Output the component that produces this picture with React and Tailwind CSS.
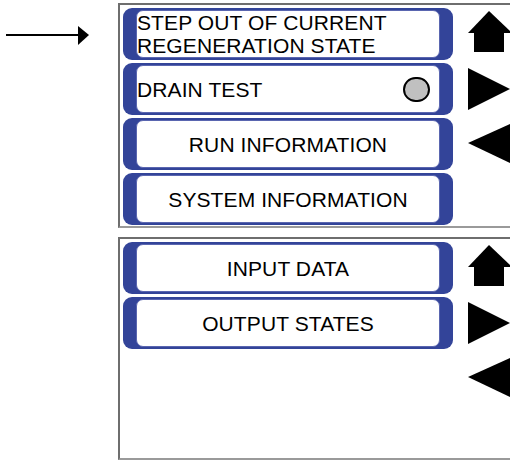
import React from 'react';

const font = { fontFamily: '"Liberation Sans", Arial, sans-serif' };

const MenuButton = ({ children, align = 'center', dot = false }) => (
  <div className="h-[52px] w-[330px] bg-[#334499] rounded-[9px] px-[13px] py-[2px] flex">
    <div
      className={`flex-1 bg-white rounded-[7px] border border-[#5a66b0] flex items-center text-[21px] leading-[23px] text-black ${
        align === 'left' ? 'justify-between pl-0 pr-[9px]' : 'justify-center'
      }`}
    >
      <span className="tracking-[0.1px]">{children}</span>
      {dot && <span className="w-[27px] h-[25px] rounded-full bg-[#c0c0c0] border-2 border-black" />}
    </div>
  </div>
);

// up / right / left navigation arrows drawn beside each menu page
const NavIcons = () => (
  <svg width="46" height="160" viewBox="0 0 46 160" className="shrink-0 ml-[13px]">
    <polygon points="2,25 23,3 46,25" fill="#000" />
    <rect x="8" y="24" width="30" height="20" fill="#000" />
    <polygon points="2,60 2,102 44,81" fill="#000" />
    <polygon points="2,135 46,115 46,156" fill="#000" />
  </svg>
);

const Panel = ({ children, height }) => (
  <div
    className="w-[400px] border-2 border-[#6e6e6e] border-b-[#9a9a9a] bg-white pl-[3px] pt-[3px] flex items-start"
    style={{ height }}
  >
    <div className="flex flex-col gap-[3px]">{children}</div>
    <NavIcons />
  </div>
);

export default function App() {
  return (
    <div className="w-[510px] h-[461px] overflow-hidden bg-white flex" style={font}>
      <div className="w-[118px] shrink-0 pt-[25px] pl-[6px]">
        <svg width="84" height="21" viewBox="0 0 84 21">
          <rect x="0" y="9" width="74" height="2" fill="#000" />
          <polygon points="72,1 83,10 72,20" fill="#000" />
        </svg>
      </div>
      <div className="flex flex-col gap-[9px] pt-[3px] shrink-0">
        <Panel height={225}>
          <MenuButton align="left">
            STEP OUT OF CURRENT
            <br />
            REGENERATION STATE
          </MenuButton>
          <MenuButton align="left" dot>
            DRAIN TEST
          </MenuButton>
          <MenuButton>RUN INFORMATION</MenuButton>
          <MenuButton>SYSTEM INFORMATION</MenuButton>
        </Panel>
        <Panel height={223}>
          <MenuButton>INPUT DATA</MenuButton>
          <MenuButton>OUTPUT STATES</MenuButton>
        </Panel>
      </div>
    </div>
  );
}
